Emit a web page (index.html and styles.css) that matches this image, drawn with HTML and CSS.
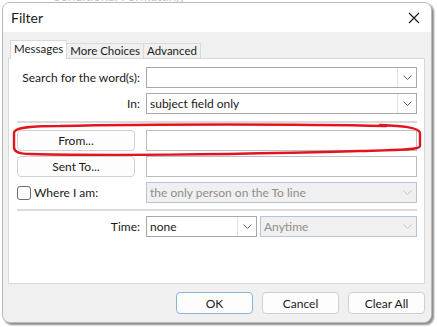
FILE: index.html
```html
<!DOCTYPE html>
<html>
<head>
   <meta charset="UTF-8">
   <title>Filter</title>
   <link rel="stylesheet" href="styles.css">
</head>
<body>
   <div class="backdrop">Conditional Formatting</div>

   <div class="window">
       <div class="titlebar">
           <span class="title">Filter</span>
           <svg class="close" width="12" height="12" viewBox="0 0 12 12">
               <path d="M1 1 L11 11 M11 1 L1 11" stroke="#1a1a1a" stroke-width="1.2" fill="none"/>
           </svg>
       </div>

       <div class="body">
           <div class="tabs">
               <div class="tab active">Messages</div>
               <div class="tab">More Choices</div>
               <div class="tab">Advanced</div>
           </div>

           <div class="panel">
               <div class="row">
                   <label class="label">Search for the word(s):</label>
                   <div class="combo">
                       <span class="combo-text"></span>
                       <span class="arrow"><svg width="9" height="5" viewBox="0 0 9 5"><path d="M0.5 0.5 L4.5 4.5 L8.5 0.5" stroke="#606060" fill="none"/></svg></span>
                   </div>
               </div>
               <div class="row">
                   <label class="label">In:</label>
                   <div class="combo">
                       <span class="combo-text">subject field only</span>
                       <span class="arrow"><svg width="9" height="5" viewBox="0 0 9 5"><path d="M0.5 0.5 L4.5 4.5 L8.5 0.5" stroke="#606060" fill="none"/></svg></span>
                   </div>
               </div>

               <div class="sep"></div>

               <div class="row">
                   <button class="btn small">From...</button>
                   <div class="field"></div>
               </div>
               <div class="row">
                   <button class="btn small">Sent To...</button>
                   <div class="field"></div>
               </div>
               <div class="row">
                   <div class="check">
                       <span class="box"></span>
                       <span>Where I am:</span>
                   </div>
                   <div class="combo disabled">
                       <span class="combo-text">the only person on the To line</span>
                       <span class="arrow"><svg width="9" height="5" viewBox="0 0 9 5"><path d="M0.5 0.5 L4.5 4.5 L8.5 0.5" stroke="#c4c4c4" fill="none"/></svg></span>
                   </div>
               </div>

               <div class="sep sep-low"></div>

               <div class="row">
                   <label class="label">Time:</label>
                   <div class="pair">
                       <div class="combo time">
                           <span class="combo-text">none</span>
                           <span class="arrow"><svg width="9" height="5" viewBox="0 0 9 5"><path d="M0.5 0.5 L4.5 4.5 L8.5 0.5" stroke="#606060" fill="none"/></svg></span>
                       </div>
                       <div class="combo disabled grow">
                           <span class="combo-text">Anytime</span>
                           <span class="arrow"><svg width="9" height="5" viewBox="0 0 9 5"><path d="M0.5 0.5 L4.5 4.5 L8.5 0.5" stroke="#c4c4c4" fill="none"/></svg></span>
                       </div>
                   </div>
               </div>
           </div>

           <div class="footer">
               <button class="btn primary">OK</button>
               <button class="btn">Cancel</button>
               <button class="btn">Clear All</button>
           </div>
       </div>
   </div>

   <!-- red hand-drawn highlight around the From row -->
   <svg class="mark" width="437" height="327" viewBox="0 0 437 327">
       <path d="M380 125 C401 126 419 127 420 133 L420 146 C420 150 400 150 360 151 C250 154 120 156 30 154 C17 154 14 151 14 147 L14 133 C14 128 25 126 60 126 C150 124 300 124 386 126"
             stroke="#e3141e" stroke-width="2.4" fill="none" stroke-linecap="round"/>
   </svg>
</body>
</html>
```

FILE: styles.css
```css
* {
    margin: 0;
    padding: 0;
    box-sizing: border-box;
}

body {
    font-family: 'Segoe UI', 'Lato', sans-serif;
    font-size: 12px;
    color: #1a1a1a;
    background-color: #ffffff;
    width: 437px;
    height: 327px;
    overflow: hidden;
    position: relative;
}

/* the window behind the dialog, only its bottom edge shows */
.backdrop {
    position: absolute;
    top: -12px;
    left: 52px;
    color: #c4c4c4;
    font-size: 13px;
}

.window {
    position: relative;
    margin: 2px 0 0 2px;
    width: 430px;
    height: 321px;
    border: 1px solid #b9b9b9;
    border-radius: 8px;
    background-color: #f0f0f0;
    box-shadow: 2px 2px 2px rgba(0, 0, 0, 0.45);
    overflow: hidden;
    display: flex;
    flex-direction: column;
}

.titlebar {
    height: 29px;
    background-color: #ffffff;
    display: flex;
    justify-content: space-between;
    align-items: center;
    padding: 0 11px 0 8px;
}

.title {
    font-size: 14px;
}

.body {
    padding: 8px 6px 0 5px;
    flex: 1;
    display: flex;
    flex-direction: column;
}

.tabs {
    display: flex;
    align-items: flex-end;
    padding-left: 2px;
    height: 18px;
    position: relative;
    z-index: 1;
}

.tab {
    height: 15px;
    padding: 0 3px;
    border: 1px solid #d9d9d9;
    border-bottom: none;
    border-left: none;
    background-color: #f0f0f0;
    font-size: 11.5px;
    line-height: 14px;
    white-space: nowrap;
}

.tab.active {
    height: 19px;
    margin-bottom: -1px;
    padding: 0 3px;
    border-left: 1px solid #d9d9d9;
    background-color: #ffffff;
    line-height: 16px;
}

.panel {
    height: 226px;
    background-color: #ffffff;
    border: 1px solid #d9d9d9;
    padding: 8px 7px 0 8px;
    display: flex;
    flex-direction: column;
    gap: 5px;
}

.row {
    display: grid;
    grid-template-columns: 123px 1fr;
    column-gap: 6px;
    align-items: center;
    height: 21px;
}

.label {
    text-align: right;
    white-space: nowrap;
}

.combo {
    height: 21px;
    border: 1px solid #a8a8a8;
    background-color: #ffffff;
    display: flex;
    align-items: center;
}

.combo-text {
    flex: 1;
    padding-left: 3px;
    white-space: nowrap;
    overflow: hidden;
}

.arrow {
    width: 19px;
    height: 19px;
    border-left: 1px solid #e2e2e2;
    display: flex;
    align-items: center;
    justify-content: center;
}

.combo.disabled {
    background-color: #f0f0f0;
    border-color: #b4c4dc;
    color: #8d8d8d;
}

.combo.disabled .arrow {
    border-left-color: #f0f0f0;
}

.pair {
    display: flex;
    gap: 3px;
}

.combo.time {
    width: 111px;
}

.grow {
    flex: 1;
}

.field {
    height: 21px;
    border: 1px solid #bcbcbc;
    background-color: #ffffff;
}

.sep {
    height: 2px;
    margin: 2px 0;
    background-color: #dadada;
}

.sep.sep-low {
    margin: 1px 0 0;
}

.btn {
    font-family: inherit;
    font-size: 12px;
    color: #1a1a1a;
    height: 22px;
    width: 77px;
    background-color: #fdfdfd;
    border: 1px solid #d0d0d0;
    border-radius: 4px;
}

.btn.small {
    width: 118px;
    height: 21px;
}

.btn.primary {
    border-color: #8fb2d8;
}

.check {
    display: flex;
    align-items: center;
    gap: 3px;
    white-space: nowrap;
}

.box {
    width: 14px;
    height: 14px;
    border: 1px solid #6d6d6d;
    border-radius: 3px;
    background-color: #ffffff;
}

.footer {
    display: flex;
    justify-content: flex-end;
    gap: 9px;
    padding: 8px 0 0;
}

.mark {
    position: absolute;
    top: 0;
    left: 0;
}
```
